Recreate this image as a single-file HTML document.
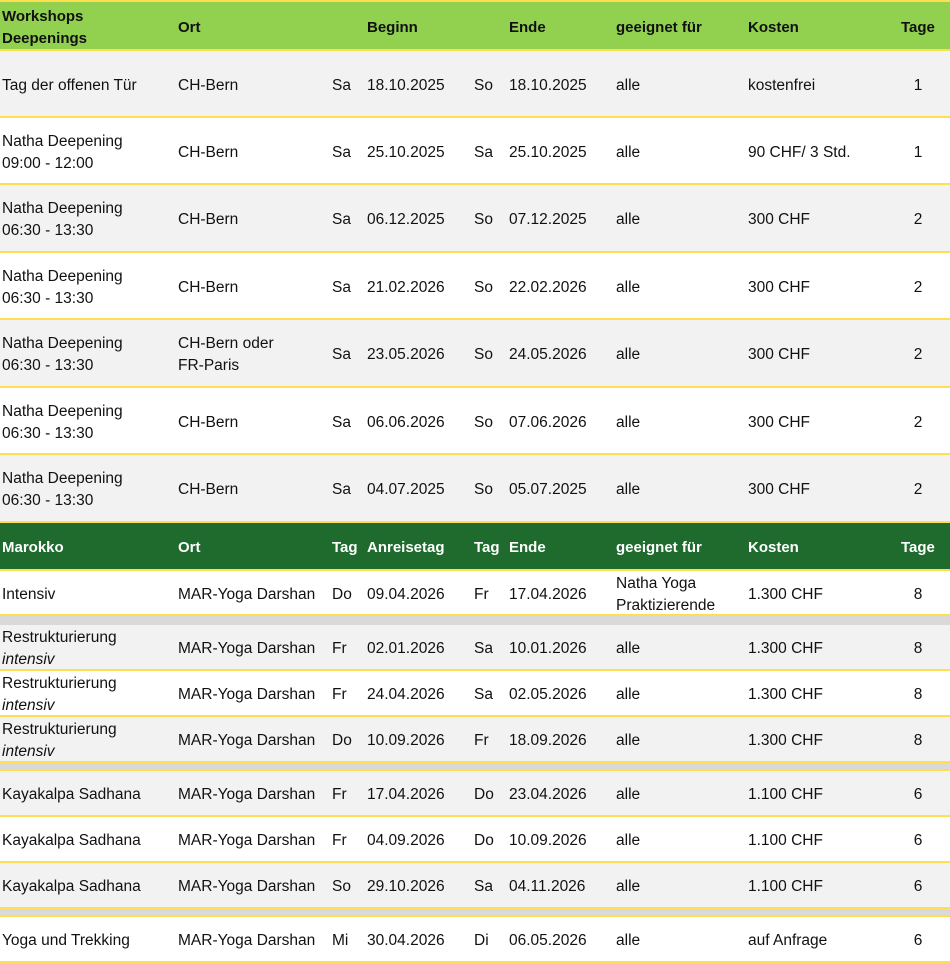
<!DOCTYPE html>
<html><head><meta charset="utf-8"><style>
*{margin:0;padding:0;box-sizing:border-box}
body{width:950px;height:963px;background:#fff;font-family:"Liberation Sans",sans-serif;font-size:15.5px;color:#111;position:relative;overflow:hidden}
.r{position:absolute;left:0;width:950px;border-bottom:2px solid #FFDF4F}
.r span{position:absolute;top:calc(50% + 2px);transform:translateY(-50%);line-height:22px;white-space:nowrap}
.g{background:#F2F2F2}.w{background:#fff}
.h1{background:#92D050;font-weight:bold;border-top:2px solid #FFDF4F;font-size:15px}
.h2{background:#1E6B2D;color:#fff;font-weight:bold;font-size:15px}
.sep{position:absolute;left:0;width:950px;background:#D9D9D9;border-bottom:2px solid #FFDF4F}
.t{width:30px;text-align:center;left:903px}
i{font-style:italic}
</style></head><body>

<div class="r h1" style="top:0;height:51px">
<span style="left:2px">Workshops<br>Deepenings</span><span style="left:178px">Ort</span><span style="left:367px">Beginn</span><span style="left:509px">Ende</span><span style="left:616px">geeignet für</span><span style="left:748px">Kosten</span><span style="left:901px">Tage</span></div>

<div class="r g" style="top:51px;height:67px"><span style="left:2px">Tag der offenen Tür</span><span style="left:178px">CH-Bern</span><span style="left:332px">Sa</span><span style="left:367px">18.10.2025</span><span style="left:474px">So</span><span style="left:509px">18.10.2025</span><span style="left:616px">alle</span><span style="left:748px">kostenfrei</span><span class="t">1</span></div>
<div class="r w" style="top:118px;height:67px"><span style="left:2px">Natha Deepening<br>09:00 - 12:00</span><span style="left:178px">CH-Bern</span><span style="left:332px">Sa</span><span style="left:367px">25.10.2025</span><span style="left:474px">Sa</span><span style="left:509px">25.10.2025</span><span style="left:616px">alle</span><span style="left:748px">90 CHF/ 3 Std.</span><span class="t">1</span></div>
<div class="r g" style="top:185px;height:68px"><span style="left:2px">Natha Deepening<br>06:30 - 13:30</span><span style="left:178px">CH-Bern</span><span style="left:332px">Sa</span><span style="left:367px">06.12.2025</span><span style="left:474px">So</span><span style="left:509px">07.12.2025</span><span style="left:616px">alle</span><span style="left:748px">300 CHF</span><span class="t">2</span></div>
<div class="r w" style="top:253px;height:67px"><span style="left:2px">Natha Deepening<br>06:30 - 13:30</span><span style="left:178px">CH-Bern</span><span style="left:332px">Sa</span><span style="left:367px">21.02.2026</span><span style="left:474px">So</span><span style="left:509px">22.02.2026</span><span style="left:616px">alle</span><span style="left:748px">300 CHF</span><span class="t">2</span></div>
<div class="r g" style="top:320px;height:68px"><span style="left:2px">Natha Deepening<br>06:30 - 13:30</span><span style="left:178px">CH-Bern oder<br>FR-Paris</span><span style="left:332px">Sa</span><span style="left:367px">23.05.2026</span><span style="left:474px">So</span><span style="left:509px">24.05.2026</span><span style="left:616px">alle</span><span style="left:748px">300 CHF</span><span class="t">2</span></div>
<div class="r w" style="top:388px;height:67px"><span style="left:2px">Natha Deepening<br>06:30 - 13:30</span><span style="left:178px">CH-Bern</span><span style="left:332px">Sa</span><span style="left:367px">06.06.2026</span><span style="left:474px">So</span><span style="left:509px">07.06.2026</span><span style="left:616px">alle</span><span style="left:748px">300 CHF</span><span class="t">2</span></div>
<div class="r g" style="top:455px;height:68px"><span style="left:2px">Natha Deepening<br>06:30 - 13:30</span><span style="left:178px">CH-Bern</span><span style="left:332px">Sa</span><span style="left:367px">04.07.2025</span><span style="left:474px">So</span><span style="left:509px">05.07.2025</span><span style="left:616px">alle</span><span style="left:748px">300 CHF</span><span class="t">2</span></div>

<div class="r h2" style="top:523px;height:48px"><span style="left:2px">Marokko</span><span style="left:178px">Ort</span><span style="left:332px">Tag</span><span style="left:367px">Anreisetag</span><span style="left:474px">Tag</span><span style="left:509px">Ende</span><span style="left:616px">geeignet für</span><span style="left:748px">Kosten</span><span style="left:901px">Tage</span></div>

<div class="r w" style="top:571px;height:45px"><span style="left:2px">Intensiv</span><span style="left:178px">MAR-Yoga Darshan</span><span style="left:332px">Do</span><span style="left:367px">09.04.2026</span><span style="left:474px">Fr</span><span style="left:509px">17.04.2026</span><span style="left:616px">Natha Yoga<br>Praktizierende</span><span style="left:748px">1.300 CHF</span><span class="t">8</span></div>
<div class="sep" style="top:616px;height:9px;border-bottom:none"></div>
<div class="r g" style="top:625px;height:46px"><span style="left:2px">Restrukturierung<br><i>intensiv</i></span><span style="left:178px">MAR-Yoga Darshan</span><span style="left:332px">Fr</span><span style="left:367px">02.01.2026</span><span style="left:474px">Sa</span><span style="left:509px">10.01.2026</span><span style="left:616px">alle</span><span style="left:748px">1.300 CHF</span><span class="t">8</span></div>
<div class="r w" style="top:671px;height:46px"><span style="left:2px">Restrukturierung<br><i>intensiv</i></span><span style="left:178px">MAR-Yoga Darshan</span><span style="left:332px">Fr</span><span style="left:367px">24.04.2026</span><span style="left:474px">Sa</span><span style="left:509px">02.05.2026</span><span style="left:616px">alle</span><span style="left:748px">1.300 CHF</span><span class="t">8</span></div>
<div class="r g" style="top:717px;height:46px"><span style="left:2px">Restrukturierung<br><i>intensiv</i></span><span style="left:178px">MAR-Yoga Darshan</span><span style="left:332px">Do</span><span style="left:367px">10.09.2026</span><span style="left:474px">Fr</span><span style="left:509px">18.09.2026</span><span style="left:616px">alle</span><span style="left:748px">1.300 CHF</span><span class="t">8</span></div>
<div class="sep" style="top:763px;height:8px"></div>
<div class="r g" style="top:771px;height:46px"><span style="left:2px">Kayakalpa Sadhana</span><span style="left:178px">MAR-Yoga Darshan</span><span style="left:332px">Fr</span><span style="left:367px">17.04.2026</span><span style="left:474px">Do</span><span style="left:509px">23.04.2026</span><span style="left:616px">alle</span><span style="left:748px">1.100 CHF</span><span class="t">6</span></div>
<div class="r w" style="top:817px;height:46px"><span style="left:2px">Kayakalpa Sadhana</span><span style="left:178px">MAR-Yoga Darshan</span><span style="left:332px">Fr</span><span style="left:367px">04.09.2026</span><span style="left:474px">Do</span><span style="left:509px">10.09.2026</span><span style="left:616px">alle</span><span style="left:748px">1.100 CHF</span><span class="t">6</span></div>
<div class="r g" style="top:863px;height:46px"><span style="left:2px">Kayakalpa Sadhana</span><span style="left:178px">MAR-Yoga Darshan</span><span style="left:332px">So</span><span style="left:367px">29.10.2026</span><span style="left:474px">Sa</span><span style="left:509px">04.11.2026</span><span style="left:616px">alle</span><span style="left:748px">1.100 CHF</span><span class="t">6</span></div>
<div class="sep" style="top:909px;height:8px"></div>
<div class="r w" style="top:917px;height:46px"><span style="left:2px">Yoga und Trekking</span><span style="left:178px">MAR-Yoga Darshan</span><span style="left:332px">Mi</span><span style="left:367px">30.04.2026</span><span style="left:474px">Di</span><span style="left:509px">06.05.2026</span><span style="left:616px">alle</span><span style="left:748px">auf Anfrage</span><span class="t">6</span></div>

</body></html>
